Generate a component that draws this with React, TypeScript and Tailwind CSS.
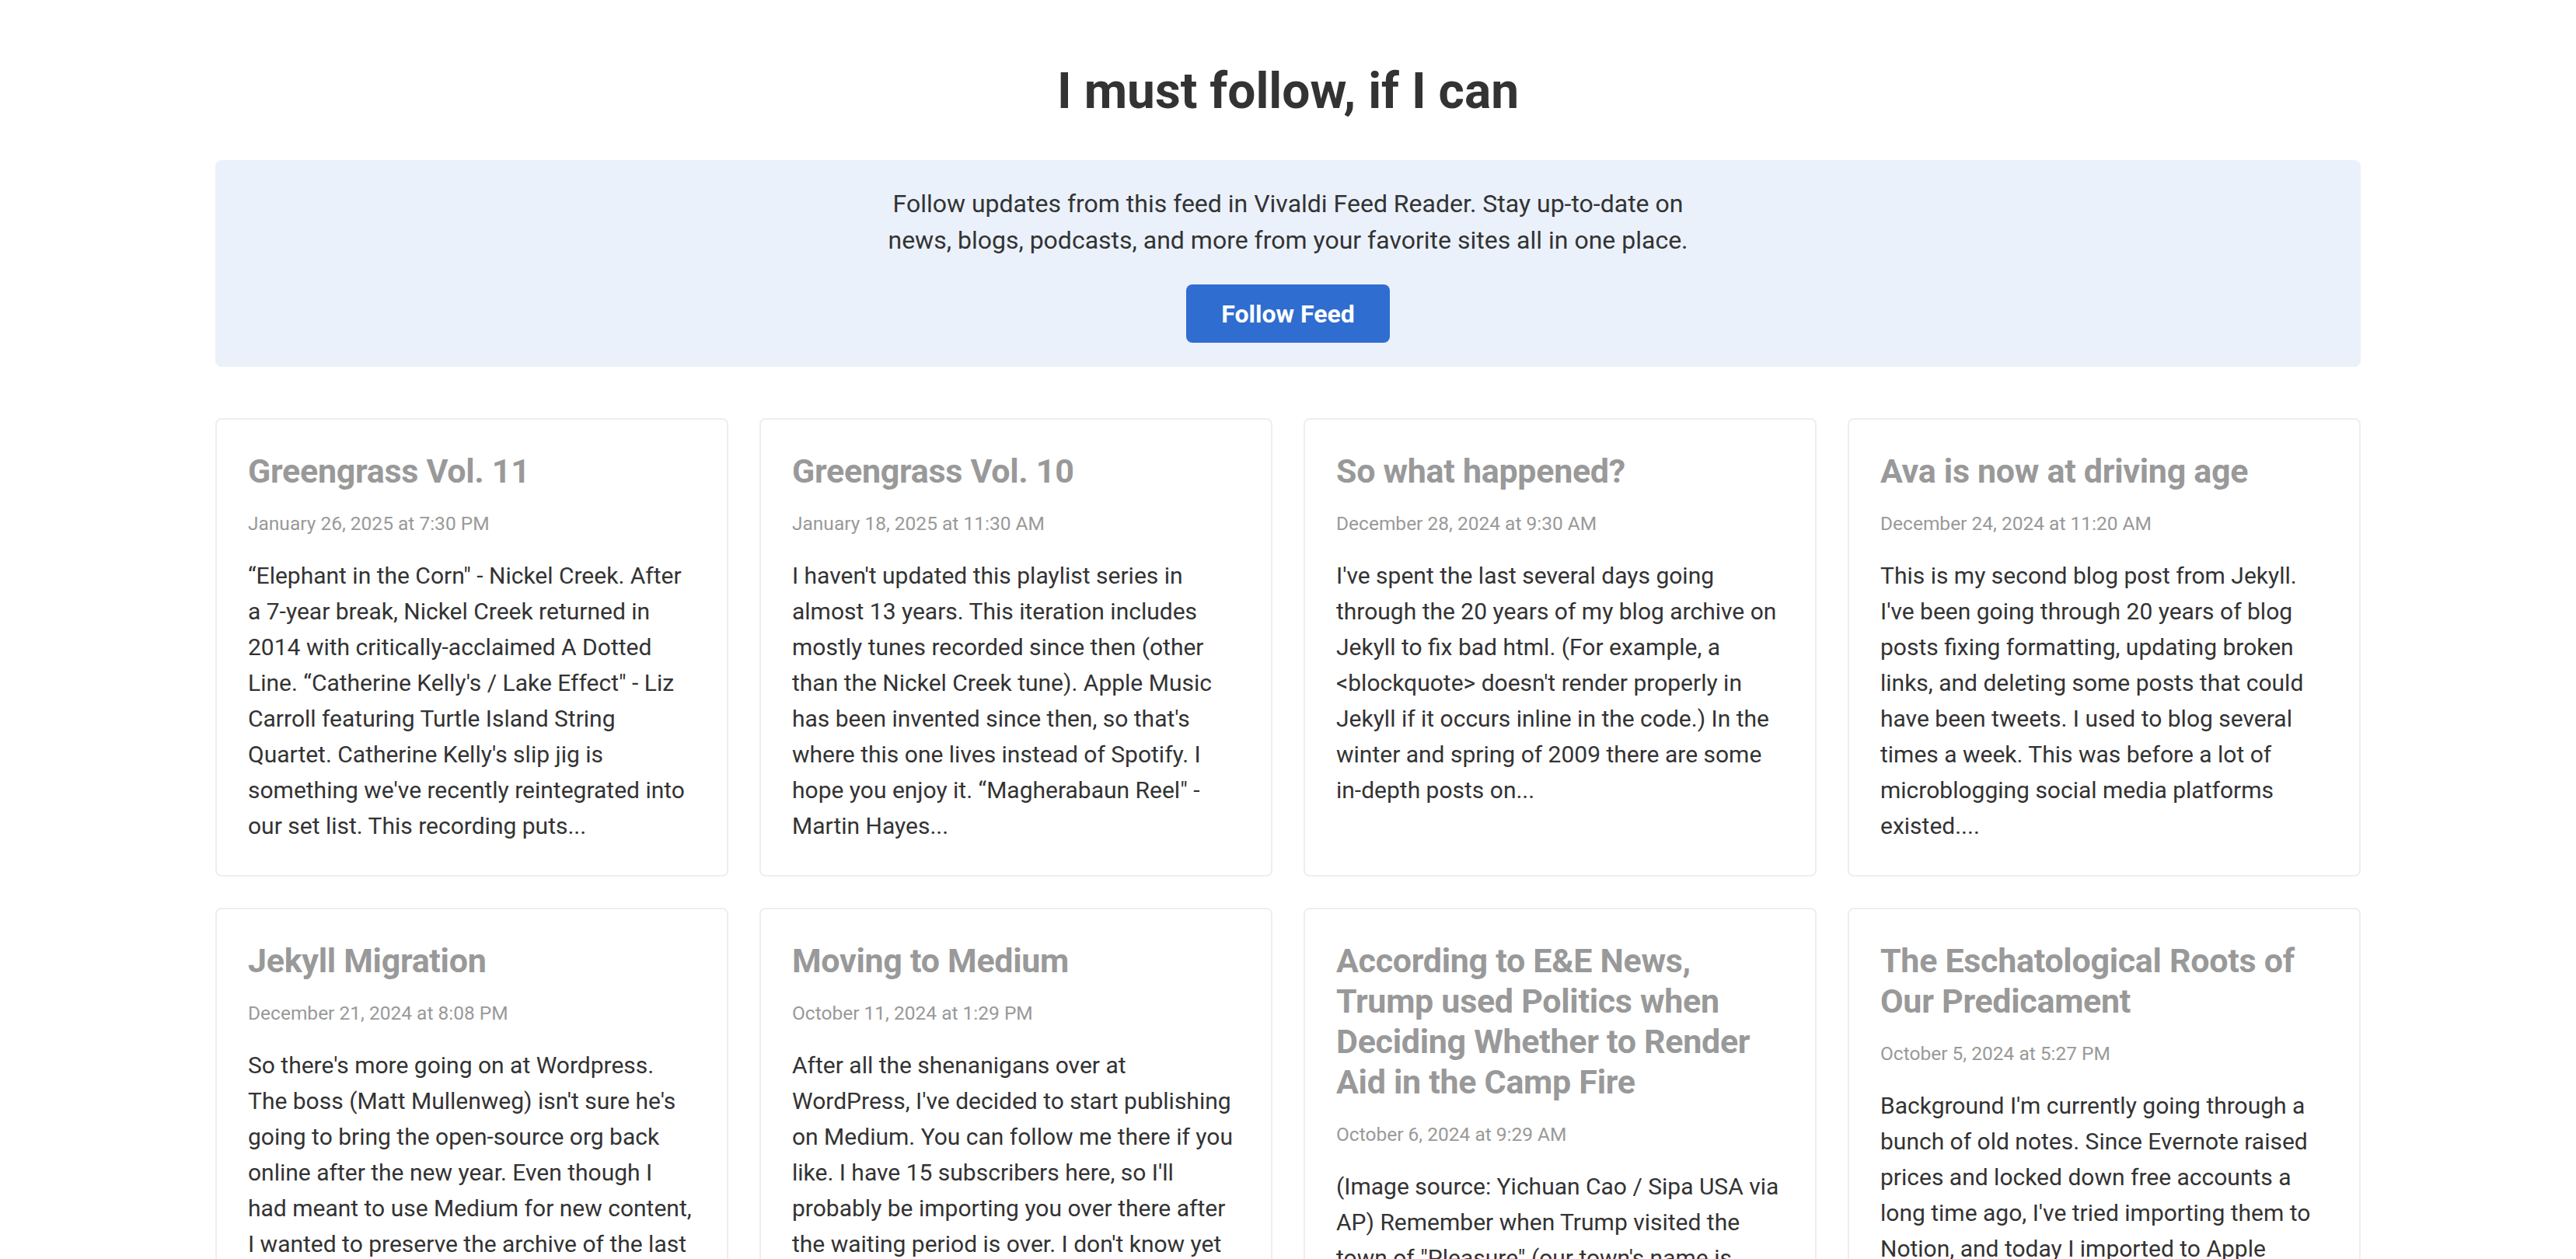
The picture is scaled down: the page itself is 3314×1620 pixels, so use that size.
import React from "react";

type Post = {
  title: string;
  date: string;
  body: string;
};

const posts: Post[] = [
  {
    title: "Greengrass Vol. 11",
    date: "January 26, 2025 at 7:30 PM",
    body: "“Elephant in the Corn″ - Nickel Creek. After a 7-year break, Nickel Creek returned in 2014 with critically-acclaimed A Dotted Line. “Catherine Kelly′s / Lake Effect″ - Liz Carroll featuring Turtle Island String Quartet. Catherine Kelly′s slip jig is something we′ve recently reintegrated into our set list. This recording puts...",
  },
  {
    title: "Greengrass Vol. 10",
    date: "January 18, 2025 at 11:30 AM",
    body: "I haven′t updated this playlist series in almost 13 years. This iteration includes mostly tunes recorded since then (other than the Nickel Creek tune). Apple Music has been invented since then, so that′s where this one lives instead of Spotify. I hope you enjoy it. “Magherabaun Reel″ - Martin Hayes...",
  },
  {
    title: "So what happened?",
    date: "December 28, 2024 at 9:30 AM",
    body: "I′ve spent the last several days going through the 20 years of my blog archive on Jekyll to fix bad html. (For example, a <blockquote> doesn′t render properly in Jekyll if it occurs inline in the code.) In the winter and spring of 2009 there are some in-depth posts on...",
  },
  {
    title: "Ava is now at driving age",
    date: "December 24, 2024 at 11:20 AM",
    body: "This is my second blog post from Jekyll. I′ve been going through 20 years of blog posts fixing formatting, updating broken links, and deleting some posts that could have been tweets. I used to blog several times a week. This was before a lot of microblogging social media platforms existed....",
  },
  {
    title: "Jekyll Migration",
    date: "December 21, 2024 at 8:08 PM",
    body: "So there′s more going on at Wordpress. The boss (Matt Mullenweg) isn′t sure he′s going to bring the open-source org back online after the new year. Even though I had meant to use Medium for new content, I wanted to preserve the archive of the last twenty years somewhere I control...",
  },
  {
    title: "Moving to Medium",
    date: "October 11, 2024 at 1:29 PM",
    body: "After all the shenanigans over at WordPress, I've decided to start publishing on Medium. You can follow me there if you like. I have 15 subscribers here, so I'll probably be importing you over there after the waiting period is over. I don't know yet what will happen to this site...",
  },
  {
    title: "According to E&E News, Trump used Politics when Deciding Whether to Render Aid in the Camp Fire",
    date: "October 6, 2024 at 9:29 AM",
    body: "(Image source: Yichuan Cao / Sipa USA via AP) Remember when Trump visited the town of \"Pleasure\" (our town's name is Paradise)...",
  },
  {
    title: "The Eschatological Roots of Our Predicament",
    date: "October 5, 2024 at 5:27 PM",
    body: "Background I'm currently going through a bunch of old notes. Since Evernote raised prices and locked down free accounts a long time ago, I've tried importing them to Notion, and today I imported to Apple Notes...",
  },
];

const PostCard = ({ post }: { post: Post }) => (
  <div className="rounded-[8px] border-2 border-[#eeeeee] bg-white px-[40px] pt-[40px] pb-[40px]">
    <h2 className="mb-[24px] text-[43px] leading-[52px] font-bold tracking-[-0.3px] text-[#999999]">{post.title}</h2>
    <div className="mb-[26px] text-[24.5px] leading-[36px] text-[#999999]">{post.date}</div>
    <p className="text-[30px] leading-[46px] text-[#333333]">{post.body}</p>
  </div>
);

export default function App() {
  return (
    <div className="min-h-screen bg-white font-['Roboto','Liberation_Sans',sans-serif] text-[#333333]">
      <div className="mx-auto w-[2760px] pt-[80px] pb-[80px]">
        <h1 className="text-center text-[64px] leading-[76px] font-bold text-[#333333]">I must follow, if I can</h1>

        <div className="mt-[50px] flex flex-col items-center rounded-[8px] bg-[#eaf1fb] pt-[33px] pb-[31px]">
          <p className="max-w-[1060px] text-center text-[32px] leading-[47px] text-[#333333]">
            Follow updates from this feed in Vivaldi Feed Reader. Stay up-to-date on news, blogs, podcasts, and more from your favorite sites all in one place.
          </p>
          <button className="mt-[33px] h-[75px] w-[262px] rounded-[8px] bg-[#2f6dd0] text-[32px] font-bold text-white">
            Follow Feed
          </button>
        </div>

        <div className="mt-[66px] grid grid-cols-4 gap-x-[40px] gap-y-[40px]">
          {posts.map((p) => (
            <PostCard key={p.title} post={p} />
          ))}
        </div>
      </div>
    </div>
  );
}
